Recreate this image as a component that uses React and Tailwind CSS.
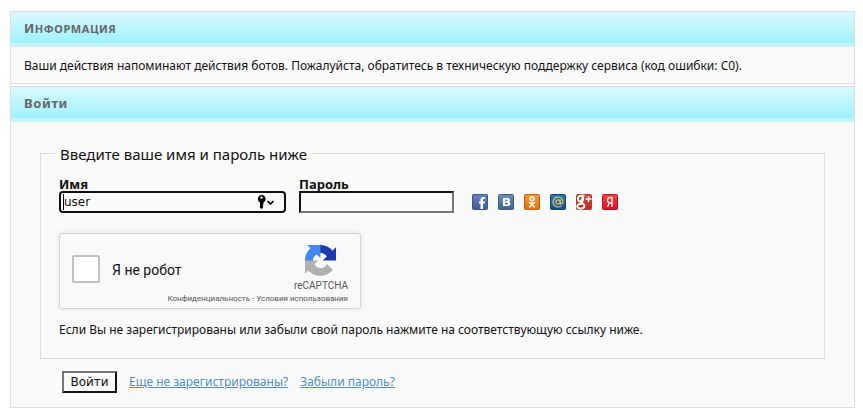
import React, { useState } from 'react'

const SOCIAL_LINKS = [
  { id: 'facebook', label: 'Facebook', from: '#6c86bd', to: '#3b5998', edge: '#3a5590' },
  { id: 'vk', label: 'ВКонтакте', from: '#6d90b8', to: '#41658f', edge: '#3a5b82' },
  { id: 'ok', label: 'Одноклассники', from: '#f89a3c', to: '#e26d0c', edge: '#c4610f' },
  { id: 'mailru', label: 'Mail.ru', from: '#2a78b5', to: '#11508a', edge: '#0f4677' },
  { id: 'google', label: 'Google+', from: '#d8483b', to: '#b9291f', edge: '#b4392f' },
  { id: 'yandex', label: 'Яндекс', from: '#f8414a', to: '#d90f1c', edge: '#c4141f' }
]

const GLYPHS = {
  facebook: <path d="M8.500 15V9.500H7V7.500h1.500V6c0-2 1-3 2.800-3H13v2h-1c-.8 0-1 .3-1 1v1.500h2l-.3 2H11V15z" fill="#fff" />,
  vk: <path fillRule="evenodd" d="M5 4h4c2 0 3 .8 3 2.200 0 .9-.5 1.500-1.200 1.700 1 .2 1.600.9 1.600 1.900 0 1.600-1.200 2.300-3.200 2.300H5zM7.200 5.500v1.700h1.300c.8 0 1.200-.3 1.200-.9s-.4-.8-1.200-.8zM7.200 8.700v1.900h1.500c.9 0 1.300-.3 1.300-1s-.4-.9-1.300-.9z" fill="#fff" />,
  ok: (
    <g fill="none" stroke="#fff3dc" strokeWidth="1.700" strokeLinecap="round">
      <circle cx="8" cy="4.800" r="1.900" />
      <path d="M5.500 8.500c1.500 1.200 3.500 1.200 5 0M8 9.500v1M8 10.400l-2.300 2.400M8 10.400l2.300 2.400" />
    </g>
  ),
  mailru: (
    <g fill="none" stroke="#e8c65a" strokeWidth="1.200" strokeLinecap="round">
      <circle cx="8" cy="8" r="2.200" />
      <path d="M10.200 6v2.800c0 1.700 2.800 1.300 2.800-.8a5 5 0 1 0-2 4" />
    </g>
  ),
  google: (
    <g fill="none" stroke="#fff" strokeWidth="1.900">
      <ellipse cx="4.500" cy="4.800" rx="2.600" ry="2.900" />
      <path d="M4.500 1.600h4M6.500 3c1.200 2.400-1.700 3.200-1.700 4.600S8.500 9.500 8.500 12c0 3.200-7.200 3.500-7.200.4 0-2 3-2.600 4.700-2.600" />
      <path d="M9.500 5h6M12.500 2v6" strokeWidth="1.500" />
    </g>
  ),
  yandex: <path d="M10 13V3.500H8.300C6.300 3.500 5.500 4.800 5.500 6.200c0 1.500.8 2.200 1.800 2.600L5.500 13M10 8.900H7.800" fill="none" stroke="#fff" strokeWidth="1.400" />
}

const SocialIcon = ({ item }) => (
  <svg width="16" height="16" viewBox="0 0 16 16" className="block">
    <defs>
      <linearGradient id={`bg-${item.id}`} x1="0" y1="0" x2="0" y2="1">
        <stop offset="0" stopColor={item.from} />
        <stop offset="1" stopColor={item.to} />
      </linearGradient>
    </defs>
    <rect x="0.500" y="0.500" width="15" height="15" rx="1" fill={`url(#bg-${item.id})`} stroke={item.edge} />
    {GLYPHS[item.id]}
  </svg>
)

const RecaptchaLogo = () => (
  <svg width="31" height="31" viewBox="0 0 64 64" className="block">
    <path d="M64 31.955l-.033-1.370V4.687l-7.160 7.160C50.948 4.674 42.033.093 32.050.093c-10.400 0-19.622 4.960-25.458 12.640l11.736 11.860a15.550 15.550 0 0 1 4.754-5.334c2.050-1.600 4.952-2.906 8.968-2.906.485 0 .86.057 1.135.163 4.976.393 9.288 3.140 11.828 7.124l-8.307 8.307L64 31.953" fill="#1c3aa9" />
    <path d="M31.862.094l-1.370.033H4.594l7.160 7.160C4.580 13.147 0 22.060 0 32.046c0 10.400 4.960 19.622 12.640 25.458L24.500 45.768a15.550 15.550 0 0 1-5.334-4.754c-1.600-2.050-2.906-4.952-2.906-8.968 0-.485.057-.86.163-1.135.393-4.976 3.140-9.288 7.124-11.828l8.307 8.307L31.860.095" fill="#4285f4" />
    <path d="M.001 32.045l.033 1.370v25.898l7.160-7.160c5.860 7.173 14.774 11.754 24.760 11.754 10.400 0 19.622-4.960 25.458-12.640l-11.736-11.860a15.550 15.550 0 0 1-4.754 5.334c-2.050 1.600-4.952 2.906-8.968 2.906-.485 0-.86-.057-1.135-.163-4.976-.393-9.288-3.140-11.828-7.124l8.307-8.307L0 32.047" fill="#b0b0b0" />
  </svg>
)

const KeyIcon = () => (
  <svg width="18" height="14" viewBox="0 0 18 14" className="block">
    <path fillRule="evenodd" d="M4.500 0a4 4 0 0 1 2 7.500V9l-1 1 1 1-1 1 .5.8L4.500 14 3 12.800V7.500A4 4 0 0 1 4.500 0zM4.500 1.400a1.200 1.200 0 1 0 0 2.400 1.200 1.200 0 0 0 0-2.400z" fill="#000" />
    <path d="M10.500 6l3 3 3-3" fill="none" stroke="#000" strokeWidth="1.600" />
  </svg>
)

const Panel = ({ title, titleClass = 'text-[13px]', children }) => (
  <section className="border border-[#dddddd] bg-[#fafafa]">
    <h2 className={`h-[35px] border-b-4 border-[#c4f3fa] bg-linear-to-b from-[#d9faff] to-[#9df1ff] px-[13px] font-['Noto_Sans',sans-serif] leading-[32px] font-bold tracking-wider text-[#666666] ${titleClass}`}>
      {title}
    </h2>
    {children}
  </section>
)

const Recaptcha = () => (
  <div className="mt-5 h-[76px] w-[302px] rounded-[3px] border border-[#d3d3d3] bg-[#f9f9f9] px-3 font-['Roboto',sans-serif] text-[#555555] shadow-[0_0_4px_1px_rgba(0,0,0,0.08)]">
    <div className="flex h-[58px] items-start justify-between">
      <label className="flex items-center gap-3 pt-[21px] text-[14px] text-[#111111]">
        <input type="checkbox" className="size-7 shrink-0 appearance-none rounded-[2px] border-2 border-[#c1c1c1] bg-white" />
        <span className="pt-[2px]">Я не робот</span>
      </label>
      <div className="flex flex-col items-center pt-[11px]">
        <RecaptchaLogo />
        <div className="mt-1 text-[10px] leading-[12px]">reCAPTCHA</div>
      </div>
    </div>
    <div className="text-right text-[8px] leading-[14px]">
      <a href="#privacy">Конфиденциальность</a> - <a href="#terms">Условия использования</a>
    </div>
  </div>
)

const App = () => {
  const [name, setName] = useState('user')
  const [password, setPassword] = useState('')

  return (
    <main className="flex flex-col gap-[2px] bg-white pt-[11px] pr-2 pb-[3px] pl-[10px] font-['Noto_Sans',sans-serif] text-[12px] leading-[18px] text-[#111111]">
      <Panel title="Информация" titleClass="text-[11px] uppercase first-letter:text-[13px]">
        <p className="px-[13px] pt-[10px] pb-2">
          Ваши действия напоминают действия ботов. Пожалуйста, обратитесь в техническую поддержку сервиса (код ошибки: C0).
        </p>
      </Panel>

      <Panel title="Войти">
        <form className="px-[29px] pt-[21px] pb-[14px]" onSubmit={(e) => e.preventDefault()}>
          <fieldset className="border border-[#dddddd] px-[18px] pb-[19px]">
            <legend className="-ml-1 px-[5px] pt-[2px] font-['Noto_Sans',sans-serif] text-[15px] leading-[18px]">Введите ваше имя и пароль ниже</legend>

            <div className="mt-[14px] flex items-end gap-[13px]">
              <div className="w-[227px]">
                <label htmlFor="name" className="block text-[13px] leading-[14px] font-bold">Имя</label>
                <div className="relative">
                  <input
                    id="name"
                    type="text"
                    value={name}
                    onChange={(e) => setName(e.target.value)}
                    className="block h-[22px] w-full rounded-[4px] border-2 border-[#101010] bg-[#fafafa] px-[3px] font-['DejaVu_Sans',sans-serif] text-[12px] outline-none"
                  />
                  <span className="absolute top-[3px] left-1 h-4 w-px bg-black" />
                  <span className="absolute top-1 right-[11px]"><KeyIcon /></span>
                </div>
              </div>
              <div className="w-[155px]">
                <label htmlFor="password" className="block text-[13px] leading-[14px] font-bold">Пароль</label>
                <input
                  id="password"
                  type="password"
                  value={password}
                  onChange={(e) => setPassword(e.target.value)}
                  className="block h-[22px] w-full border-2 border-t-[#151515] border-r-[#767676] border-b-[#767676] border-l-[#151515] bg-[#fafafa] px-[3px] outline-none"
                />
              </div>
              <div className="mb-[3px] ml-[5px] flex gap-[10px]">
                {SOCIAL_LINKS.map(item => (
                  <a key={item.id} href={`#${item.id}`} aria-label={item.label}>
                    <SocialIcon item={item} />
                  </a>
                ))}
              </div>
            </div>

            <Recaptcha />

            <p className="mt-3">Если Вы не зарегистрированы или забыли свой пароль нажмите на соответствующую ссылку ниже.</p>
          </fieldset>

          <div className="mt-3 ml-[22px] flex items-center gap-3 text-[#5090c5]">
            <button type="submit" className="h-[22px] min-w-[55px] border-2 border-t-[#767676] border-r-[#151515] border-b-[#151515] border-l-[#767676] bg-[#fafafa] px-[6px] font-['DejaVu_Sans',sans-serif] text-[12px] leading-[18px] text-[#111111]">
              Войти
            </button>
            <a href="#register" className="underline">Еще не зарегистрированы?</a>
            <a href="#forgot" className="underline">Забыли пароль?</a>
          </div>
        </form>
      </Panel>
    </main>
  )
}

export default App
